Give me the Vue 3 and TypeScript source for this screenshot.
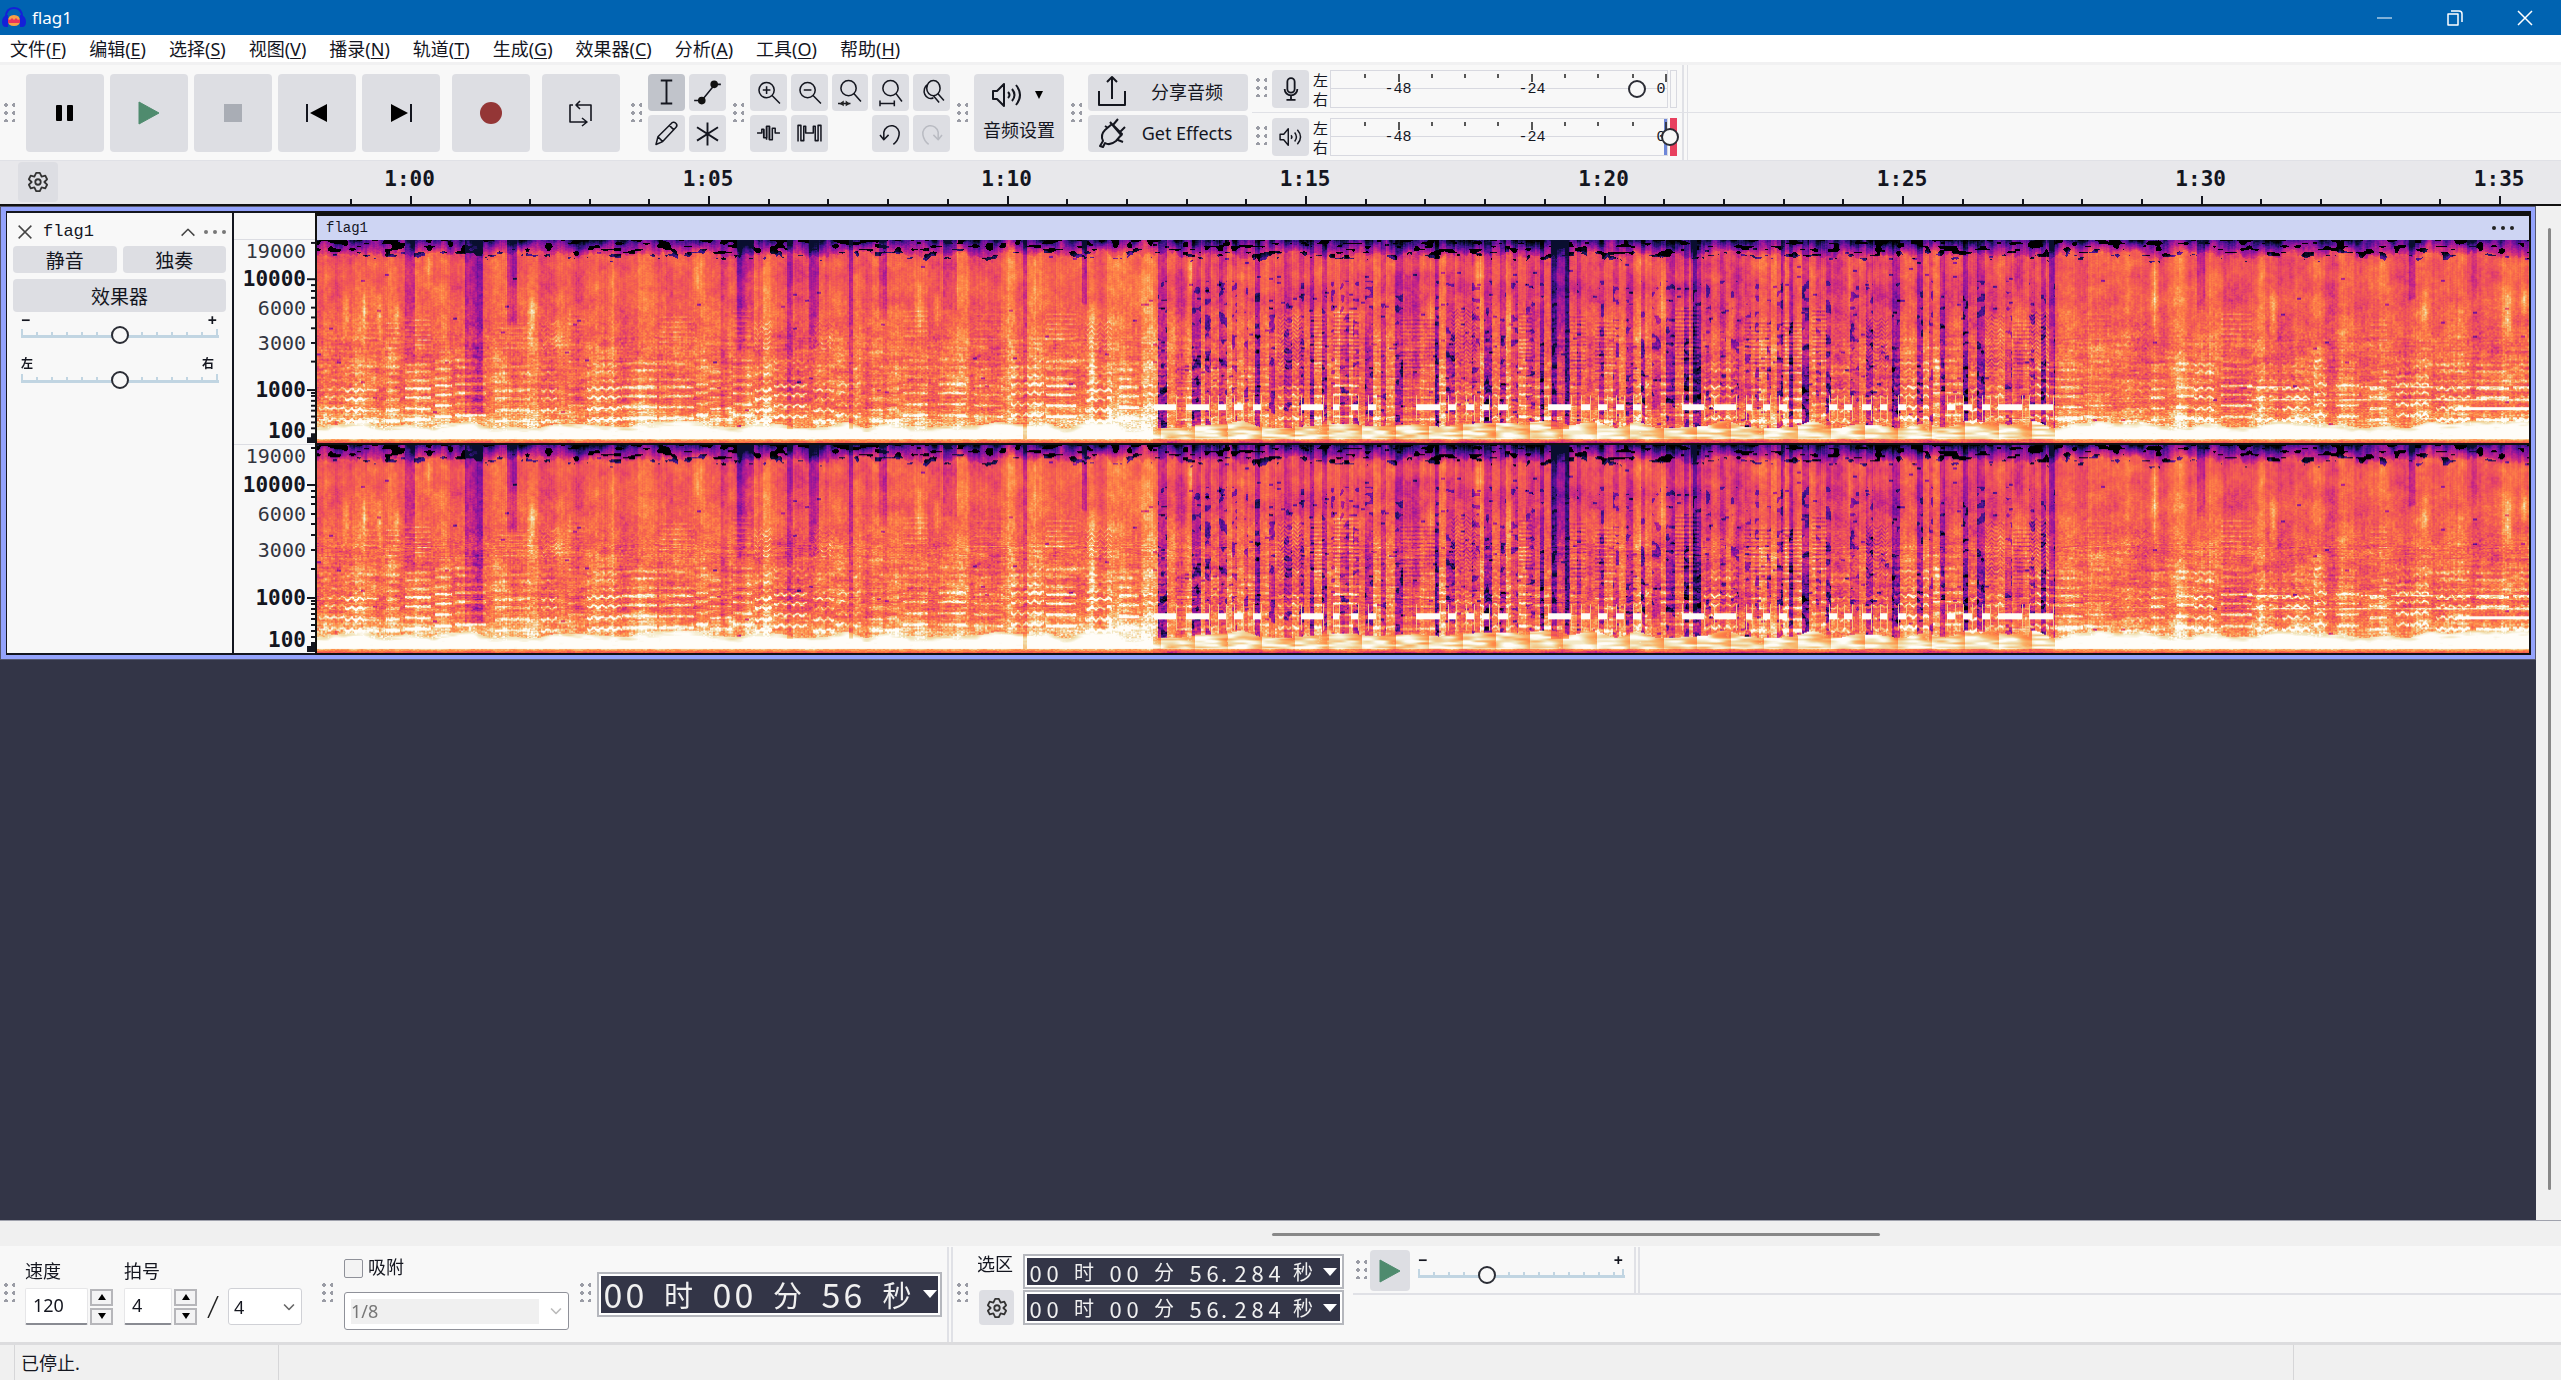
<script setup lang="ts">
import { h, onMounted, ref } from 'vue'

interface Shape { d: string; fill?: string; stroke?: string; w?: number }

const ICONS: Record<string, Shape[]> = {
  pause: [{ d: 'M3 3h4a1 1 0 0 1 1 1v14a1 1 0 0 1-1 1H3a1 1 0 0 1-1-1V4a1 1 0 0 1 1-1zM14 3h4a1 1 0 0 1 1 1v14a1 1 0 0 1-1 1h-4a1 1 0 0 1-1-1V4a1 1 0 0 1 1-1z', fill: '#000', stroke: 'none' }],
  play: [{ d: 'M1 0L21 11L1 22z', fill: '#4f8b6e', stroke: '#4f8b6e', w: 1 }],
  stop: [{ d: 'M2 2h18v18H2z', fill: '#a9adb5', stroke: 'none' }],
  prev: [{ d: 'M1 2v18', w: 2 }, { d: 'M21 2v18L4 11z', fill: '#000', stroke: 'none' }],
  next: [{ d: 'M21 2v18', w: 2 }, { d: 'M1 2v18L18 11z', fill: '#000', stroke: 'none' }],
  record: [{ d: 'M11 0a11 11 0 1 1 0 22a11 11 0 1 1 0-22z', fill: '#943636', stroke: 'none' }],
  loop: [{ d: 'M3 3H0v17h6M10 20h6M16 20h0M21 19V3H6M10-1L6 3l4 4M12 16l5 4l-5 4M6 20h10' }],
  ibeam: [{ d: 'M5-1h12M5 23h12M11-1v24', w: 2 }],
  envelope: [{ d: 'M-3 20h8M17 3h8M5 20L18 4' }, { d: 'M5 16a4 4 0 1 1 0 8a4 4 0 1 1 0-8zM18-1a4 4 0 1 1 0 8a4 4 0 1 1 0-8z', fill: '#111', stroke: 'none' }],
  pencil: [{ d: 'M0 23l2-8L16 1a3 3 0 0 1 5 4L7 20zM2 15l5 5M14 3l5 5' }],
  star: [{ d: 'M11 0v24M0 5l22 14M22 5L0 19', w: 2 }],
  zoomIn: [{ d: 'M9 1a8 8 0 1 1 0 16a8 8 0 1 1 0-16zM15 15l8 8M9 5v8M5 9h8' }],
  zoomOut: [{ d: 'M9 1a8 8 0 1 1 0 16a8 8 0 1 1 0-16zM15 15l8 8M5 9h8' }],
  zoomSel: [{ d: 'M10-1a8 8 0 1 1 0 16a8 8 0 1 1 0-16zM16 13l7 8M-1 23h13' }, { d: 'M-1 23h3v-1l3-2v6l-3-2zM12 23h-1l-4-3v6z', fill: '#222', stroke: 'none' }],
  zoomFit: [{ d: 'M11-1a8 8 0 1 1 0 16a8 8 0 1 1 0-16zM17 13l6 8M0 23h15M0 20v6M15 20v6' }],
  zoomToggle: [{ d: 'M13-1a7 8 0 1 1 0 16a7 8 0 1 1 0-16zM7 3a6 7 0 1 0 6 14M18 13l6 7M13 15l6 7' }],
  trim: [{ d: 'M-1 11h5v-4h2v9h3v-12h3v14h3v-12h3v5h5' }, { d: 'M6 16v-9M9 4v14M12 4v14' }],
  silence: [{ d: 'M-1 20V3h3v16h3V4h2v7h8V4h2v15h3V3h3v17' }],
  undo: [{ d: 'M4 17V10a8 8 0 1 1 16 3q-1 6-6 10M0 13l4 5l5-5' }],
  redo: [{ d: 'M18 17V10a8 8 0 1 0-16 3q1 6 6 10M22 13l-4 5l-5-5' }],
  share: [{ d: 'M-2 10v14h26V10M11 18V-4M6 1l5-5l5 5', w: 2 }],
  plug: [{ d: 'M-1 24l3-5q-3-6 2-11l7-6l10 10l-6 7q-6 5-11 2l-2 4zM7 6l-3-2M12 3l5-6M19 10l5-5M17 18l5 2M9 0l12 14', w: 2 }],
  speaker: [{ d: 'M-2 7h4l7-7v22l-7-7h-4zM13 8q3 3 0 6M17 5q5 6 0 12M21 1q8 10 0 20', w: 2 }],
  speakerSmall: [{ d: 'M-1 8h4l5-6v18l-5-6h-4zM11 9q2 2 0 4M15 6q4 5 0 10M18 3q7 8 0 16' }],
  mic: [{ d: 'M11-1a4 4 0 0 1 4 4v8a4 4 0 0 1-8 0V3a4 4 0 0 1 4-4zM4 11a7 7 0 0 0 14 0M11 18v5M6 23h10', w: 2 }],
  gear: [{ d: 'M9 1h4l2 4l4-1l2 4l-3 3l3 3l-2 4l-4-1l-2 4H9l-2-4l-4 1l-2-4l3-3l-3-3l2-4l4 1zM11 8a3 3 0 1 1 0 6a3 3 0 1 1 0-6z', w: 2 }],
  close: [{ d: 'M4 4l14 14M18 4L4 18' }],
  up: [{ d: 'M4 15l7-7l7 7' }],
  chevron: [{ d: 'M5 8l6 6l6-6', w: 2 }],
}

const Icon = (props: { name: string; size?: number }) =>
  h(
    'svg',
    { width: props.size ?? 22, height: props.size ?? 22, viewBox: '0 0 22 22', overflow: 'visible', 'aria-hidden': 'true' },
    ICONS[props.name].map((s) =>
      h('path', { d: s.d, fill: s.fill ?? 'none', stroke: s.stroke ?? 'currentColor', 'stroke-width': s.w ?? 1.6, 'stroke-linejoin': 'round' }),
    ),
  )
Icon.props = ['name', 'size']

const menus = [
  ['文件', 'F'], ['编辑', 'E'], ['选择', 'S'], ['视图', 'V'], ['播录', 'N'], ['轨道', 'T'],
  ['生成', 'G'], ['效果器', 'C'], ['分析', 'A'], ['工具', 'O'], ['帮助', 'H'],
]
const transport = [
  { icon: 'pause', label: '暂停' }, { icon: 'play', label: '播放' }, { icon: 'stop', label: '停止' },
  { icon: 'prev', label: '跳至开头' }, { icon: 'next', label: '跳至结尾' },
]
const editTools = ['zoomIn', 'zoomOut', 'zoomSel', 'zoomFit', 'zoomToggle', 'trim', 'silence', '', 'undo', 'redo']

const seconds = Array.from({ length: 37 }, (_, i) => {
  const t = 59 + i
  return { t, major: t % 5 === 0, label: `${Math.floor(t / 60)}:${String(t % 60).padStart(2, '0')}` }
})

const meterTicks = [35, 69, 102, 135, 168, 202, 235, 268, 303, 336]

const freqTicks = [4, 41, 47, 53, 60, 70, 80, 91, 106, 125, 154, 157, 160, 165, 170, 175, 181, 187, 193]
const freqLabels = [
  { y: 12, text: '19000', bold: false }, { y: 41, text: '10000', bold: true }, { y: 70, text: '6000', bold: false },
  { y: 106, text: '3000', bold: false }, { y: 154, text: '1000', bold: true }, { y: 196, text: '100', bold: true },
]
const channels = [{ height: 205 }, { height: 209 }]

const selectionStart = ['0', '0', '时', '0', '0', '分', '5', '6', '.', '2', '8', '4', '秒']
const playPosition = ['0', '0', '时', '0', '0', '分', '5', '6', '秒']
const kind = (c: string) => (c === '.' ? 'dot' : /\d/.test(c) ? 'digit' : 'unit')

/* Spectrogram */
const W = 2212
const H = 204
const canvases = ref<HTMLCanvasElement[]>([])

const STOPS: [number, number, number, number][] = [
  [0, 0, 0, 0], [0.1, 12, 18, 60], [0.2, 60, 18, 140], [0.32, 130, 18, 160], [0.44, 190, 32, 140],
  [0.56, 232, 70, 100], [0.67, 247, 102, 76], [0.77, 255, 138, 70], [0.86, 248, 184, 108], [0.93, 240, 226, 180], [1, 255, 253, 248],
]
const palette = Array.from({ length: 256 }, (_, i) => {
  const v = i / 255
  let k = 1
  while (k < STOPS.length - 1 && STOPS[k][0] < v) k++
  const a = STOPS[k - 1]
  const b = STOPS[k]
  const f = (v - a[0]) / (b[0] - a[0])
  return [1, 2, 3].map((c) => a[c] + (b[c] - a[c]) * f)
})

function hash(a: number, b: number): number {
  let n = Math.imul(a | 0, 374761393) ^ Math.imul((b | 0) + 77, 668265263)
  n = Math.imul(n ^ (n >>> 13), 1274126177)
  return ((n ^ (n >>> 16)) >>> 0) / 4294967296
}
function smooth(x: number, seed: number): number {
  const i = Math.floor(x)
  const f = x - i
  const s = f * f * (3 - 2 * f)
  return hash(i, seed) * (1 - s) + hash(i + 1, seed) * s
}
function noise2(x: number, y: number, seed: number): number {
  const j = Math.floor(y)
  const f = y - j
  return smooth(x, seed + j * 31) * (1 - f) + smooth(x, seed + (j + 1) * 31) * f
}

/* Held notes of the lead tone, as [start, end] columns */
const LEAD: [number, number][] = [
  [837, 859], [869, 892], [901, 909], [917, 926], [936, 944], [984, 1006], [1016, 1022], [1034, 1041], [1051, 1059],
  [1099, 1123], [1131, 1139], [1149, 1157], [1165, 1172], [1181, 1191], [1231, 1254], [1264, 1273], [1281, 1290],
  [1299, 1307], [1316, 1324], [1365, 1387], [1397, 1419], [1429, 1435], [1446, 1453], [1462, 1470], [1512, 1520],
  [1527, 1535], [1545, 1554], [1563, 1570], [1581, 1589], [1630, 1638], [1646, 1655], [1665, 1673], [1681, 1705], [1712, 1736],
]
/* Quiet columns, as [start, end, depth, lowest row] */
const QUIET: [number, number, number, number][] = [
  [88, 98, 0.2, 120], [148, 166, 0.26, 175], [190, 200, 0.2, 85], [420, 437, 0.24, 110], [470, 476, 0.18, 190],
  [492, 502, 0.24, 110], [532, 536, 0.2, 190], [562, 570, 0.18, 80], [626, 640, 0.16, 70], [706, 710, 0.24, 200],
  [765, 770, 0.28, 65], [1234, 1252, 0.34, 190], [1374, 1380, 0.22, 175], [1464, 1468, 0.24, 160], [1732, 1737, 0.2, 190],
  [1880, 1888, 0.18, 70], [2092, 2098, 0.2, 60], [2150, 2160, 0.1, 60],
]
/* Bright bursts, as [centre, half width, first row, last row] */
const BURSTS: [number, number, number, number][] = [
  [29, 4, 40, 90], [47, 3, 50, 90], [62, 3, 50, 105], [80, 4, 50, 105], [111, 5, 5, 50], [214, 4, 45, 115], [380, 6, 5, 60],
  [602, 5, 40, 95], [620, 4, 50, 95], [775, 5, 60, 190], [874, 4, 5, 60], [1025, 4, 30, 110], [1113, 4, 55, 90], [1142, 5, 50, 110],
  [1160, 5, 0, 70], [1193, 5, 45, 110], [1298, 4, 50, 115], [1345, 6, 20, 90], [1415, 4, 55, 105], [1533, 4, 5, 80],
  [1552, 3, 5, 100], [1701, 5, 45, 100], [1837, 4, 5, 100], [1956, 4, 45, 105], [2107, 5, 45, 90], [2190, 5, 45, 105], [2207, 4, 40, 80],
]

interface Note { x0: number; x1: number; shift: number; gain: number; top: number; wave: number }
function buildNotes(): Note[] {
  const notes: Note[] = []
  let x = 2
  let i = 0
  while (x < W) {
    const len = 12 + Math.floor(hash(i, 5) * 24)
    notes.push({
      x0: x, x1: Math.min(W, x + len), shift: Math.floor(hash(i, 6) * 5) * 3 - 7,
      gain: 0.4 + hash(i, 7) * 0.6, top: hash(i, 9) < 0.45 ? 1 : 0, wave: hash(i, 8) < 0.4 ? 1 : 0,
    })
    x += len + Math.floor(hash(i, 10) * 12)
    i++
  }
  return notes
}

function buildField(): Float32Array {
  const v = new Float32Array(W * H)
  const band: number[] = []
  for (let x = 0, i = 0; x < W; i++) {
    const inBeat = x > 835 && x < 1738
    const len = inBeat ? 4 + Math.floor(hash(i, 1) * 6) : 3 + Math.floor(hash(i, 1) * 13)
    const lvl = inBeat ? (i % 2) * 0.5 + hash(i, 2) * 0.5 : hash(i, 2)
    for (let k = 0; k < len && x < W; k++, x++) band[x] = lvl
  }
  for (let x = 0; x < W; x++) {
    const beat = x > 835 && x < 1738
    const late = x > 690 && x <= 835
    const phase = ((x - 844 + 3350) % 33.5) / 33.5
    const col = smooth(x / 9, 12) * 0.6 + band[x] * 0.4
    const fine = hash(x, 14) - 0.5
    const topEdge = 8 + smooth(x / 14, 15) * 7 + smooth(x / 3, 16) * 5
    for (let y = 0; y < H; y++) {
      const mid = Math.min(1, Math.max(0, (y - 40) / 70))
      let s = 0.64 + (col - 0.5) * (beat ? 0.3 : 0.22) + fine * 0.05 + mid * 0.04
      if (late) s += 0.05
      if (beat) {
        s -= 0.03
        const reach = Math.min(1, Math.max(0, (y - 60) / 70))
        const stripe = Math.max(0, 0.5 - band[x])
        s -= stripe * (0.2 + reach * 0.5 * (0.4 + noise2(x / 30, y / 30, 200)))
        s -= Math.exp(-((y - 55) ** 2) / 400) * 0.06
        if (stripe > 0.1 && y > 40 && noise2(x / 5, y / 4, 950) > 0.72) s -= 0.25
      }
      s += (noise2(x / 20, y / 12, 40) - 0.5) * 0.12
      s += (noise2(x / 3, y / 4, 90) - 0.5) * 0.1
      s += (hash(x >> 1, y + 4000) - 0.5) * (0.06 + mid * 0.13)
      if (y > 95 && y < 186) s += (noise2(x / 18, y * 0.9, 300) - 0.5) * 0.18
      if (hash(x >> 2, (y >> 1) + 900) < (beat ? 0.012 : 0.003)) s -= 0.3
      if (y < topEdge + 8) s -= 0.08 * (1 - y / (topEdge + 8))
      if (y < topEdge) s -= 0.08 + 0.42 * (1 - y / topEdge) * (0.3 + smooth(x / 6, 60) * 0.8)
      if (y < topEdge + 3 && noise2(x / 7, y / 3, 500) > 0.68) s -= 0.45
      if (y > 160) {
        const glow = Math.min(1, (y - 160) / 24)
        s += glow * (beat ? 0.14 : 0.18)
      }
      const floor = 181 + smooth(x / 22, 70) * 8
      if (y > floor) {
        s = beat
          ? Math.max(s * 0.9, 0.95 - Math.max(0, phase - (y - 176) / 30) * 0.3 + (noise2(x / 14, y / 2, 620) - 0.5) * 0.22)
          : Math.max(s, 0.92 + Math.min(0.12, (y - floor) * 0.02) + (noise2(x / 9, y / 2, 600) - 0.5) * 0.1)
      }
      if (y > 199) s -= (y - 198) * 0.07 + hash(x >> 1, y) * 0.1
      v[y * W + x] = s
    }
  }
  for (const [a, b, depth, low] of QUIET)
    for (let x = a; x < b; x++)
      for (let y = 0; y < low; y++) v[y * W + x] = Math.max(0.08, v[y * W + x] - depth * (1 - (y / low) * 0.5))
  for (const [c, hw, y0, y1] of BURSTS)
    for (let x = c - hw; x <= c + hw && x < W; x++)
      for (let y = y0; y < y1; y++) {
        const t = Math.sin((Math.PI * (y - y0)) / (y1 - y0))
        v[y * W + x] += 0.18 * t * (1 - Math.abs(x - c) / (hw + 1))
      }
  const bases = [179, 168, 157, 148, 140, 131, 124]
  for (const n of buildNotes()) {
    const beat = n.x0 > 835 && n.x0 < 1738
    for (let x = n.x0; x < n.x1; x++) {
      const wob = n.wave ? Math.sin((x - n.x0) * 0.75) * 1.2 : 0
      bases.forEach((b, k) => {
        const cy = b + n.shift * 0.5 + wob
        const amp = (k < 4 ? 0.34 : 0.17) * n.gain
        for (let y = Math.floor(cy) - 2; y <= cy + 2; y++) {
          const d = Math.abs(y - cy)
          if (d < 1.8) v[y * W + x] += amp * (1 - d / 2.4)
          else if (beat) v[y * W + x] -= 0.05
        }
      })
      if (n.top) {
        for (let k = 0; k < (beat ? 14 : 6); k++) {
          const cy = (beat ? 76 : 78) + n.shift + k * (beat ? 4 : 5) + wob * 1.3
          const y = Math.round(cy)
          v[y * W + x] += 0.14 * n.gain
          v[(y + 2) * W + x] -= beat ? 0.12 : 0.04
        }
      }
    }
  }
  for (const [a, b] of LEAD) {
    for (let x = a; x < b; x++) for (let y = 165; y < 171; y++) v[y * W + x] = 1.1
    for (const x of [a, b]) for (let y = 156; y < 182; y++) v[y * W + x] = Math.max(v[y * W + x], 0.88)
  }
  for (let x = 1930; x < W; x++) {
    for (const y of [147, 160]) if (smooth(x / 15, y) > 0.3) { v[y * W + x] += 0.25; v[(y + 1) * W + x] += 0.15 }
    if (x > 2140) for (let y = 168; y < 171; y++) v[y * W + x] = 1
  }
  return v
}

onMounted(() => {
  const field = buildField()
  for (const canvas of canvases.value) {
    const ctx = canvas.getContext('2d')
    if (!ctx) continue
    const img = ctx.createImageData(W, H)
    for (let i = 0; i < W * H; i++) {
      const c = palette[Math.max(0, Math.min(255, Math.round(field[i] * 255)))]
      img.data[i * 4] = c[0]
      img.data[i * 4 + 1] = c[1]
      img.data[i * 4 + 2] = c[2]
      img.data[i * 4 + 3] = 255
    }
    ctx.putImageData(img, 0, 0)
  }
})
</script>

<template>
  <div class="app">
    <header class="titlebar">
      <svg class="logo" width="24" height="22" viewBox="0 0 24 22" aria-hidden="true">
        <path d="M4 10Q4 1 12 1T20 10" fill="none" stroke="#1420d8" stroke-width="2" />
        <path d="M4 8Q0 10 0 15T4 20H6V8zM20 8q4 2 4 7t-4 5h-2V8z" fill="#1420d8" />
        <path d="M6 14q0-6 6-6t6 6q0 5-6 5t-6-5z" fill="#f7a046" />
        <path d="M6 12l2 1l2-2l2 2l2-2l2 2l2-1v4H6z" fill="#e8345c" />
      </svg>
      <h1>flag1</h1>
      <div class="caption">
        <button aria-label="最小化"><svg width="16" height="16"><path d="M0 8h15" stroke="#fff" stroke-width="1" fill="none" /></svg></button>
        <button aria-label="还原"><svg width="16" height="16"><path d="M1 4h10v11H1zM4 1h8q3 0 3 3v8" stroke="#fff" stroke-width="1.500" fill="none" stroke-linejoin="round" /></svg></button>
        <button aria-label="关闭"><svg width="16" height="16"><path d="M1 1l14 14M15 1L1 15" stroke="#fff" stroke-width="1.500" fill="none" /></svg></button>
      </div>
    </header>

    <nav class="menubar">
      <button v-for="m in menus" :key="m[1]">{{ m[0] }}(<u>{{ m[1] }}</u>)</button>
    </nav>

    <div class="topbar">
      <span class="grip" />
      <div class="transport">
        <button v-for="b in transport" :key="b.icon" class="btn big" :aria-label="b.label"><Icon :name="b.icon" /></button>
        <button class="btn big apart" aria-label="录制"><Icon name="record" /></button>
        <button class="btn big apart" aria-label="循环"><Icon name="loop" /></button>
      </div>
      <span class="grip" />
      <div class="tools">
        <button class="btn active" aria-label="选择工具"><Icon name="ibeam" /></button>
        <button class="btn" aria-label="包络工具"><Icon name="envelope" /></button>
        <button class="btn" aria-label="绘制工具"><Icon name="pencil" /></button>
        <button class="btn" aria-label="多功能工具"><Icon name="star" /></button>
      </div>
      <span class="grip" />
      <div class="tools edit">
        <template v-for="(t, i) in editTools" :key="i">
          <button v-if="t" class="btn" :class="{ off: t === 'redo' }" :aria-label="t"><Icon :name="t" /></button>
          <span v-else />
        </template>
      </div>
      <span class="grip" />
      <button class="btn setup">
        <span class="setup-icons"><Icon name="speaker" /><i class="tri" /></span>
        音频设置
      </button>
      <span class="grip" />
      <div class="share">
        <button class="btn"><Icon name="share" /><span>分享音频</span></button>
        <button class="btn"><Icon name="plug" /><span>Get Effects</span></button>
      </div>
      <div class="meters">
        <div v-for="m in ['mic', 'speakerSmall']" :key="m" class="meter-row">
          <div class="meter-bar" :class="m">
            <span class="grip" />
            <button class="btn" :aria-label="m === 'mic' ? '录制电平' : '播放电平'"><Icon :name="m" /></button>
            <div class="lr"><span>左</span><span>右</span></div>
            <div class="meter">
              <svg width="338" height="38" aria-hidden="true">
                <rect v-if="m !== 'mic'" x="334" y="1" width="3" height="36" fill="#6d86d8" />
                <path d="M0 18.500H338" stroke="#d8d9e0" />
                <path v-for="(x, i) in meterTicks" :key="x" :d="`M${x} 4v${i % 4 === 1 ? 8 : 4}`" stroke="#222" stroke-width="1.500" />
                <text x="68" y="23">-48</text>
                <text x="202" y="23">-24</text>
                <text x="331" y="23">0</text>
              </svg>
            </div>
            <div class="clip-light" />
            <input type="range" class="level" :aria-label="m === 'mic' ? '录制音量' : '播放音量'" :value="m === 'mic' ? 90 : 100" />
          </div>
          <div class="meter-rest" />
        </div>
      </div>
    </div>

    <div class="timeline">
      <button class="btn gear" aria-label="时间线选项"><Icon name="gear" :size="20" /></button>
      <div class="seconds">
        <div v-for="s in seconds" :key="s.t" class="second" :class="{ major: s.major }"><span v-if="s.major">{{ s.label }}</span></div>
      </div>
    </div>

    <main class="workspace">
      <div class="tracks">
        <section class="track">
          <div class="panel">
            <div class="panel-head">
              <button aria-label="关闭轨道"><Icon name="close" /></button>
              <span class="name">flag1</span>
              <button aria-label="折叠"><Icon name="up" /></button>
              <button class="dots" aria-label="轨道菜单"><i /><i /><i /></button>
            </div>
            <div class="pair">
              <button class="btn">静音</button>
              <button class="btn">独奏</button>
            </div>
            <button class="btn fx">效果器</button>
            <div class="slider">
              <div class="ends"><b>−</b><b>+</b></div>
              <input type="range" aria-label="增益" value="50" />
            </div>
            <div class="slider pan">
              <div class="ends"><span>左</span><span>右</span></div>
              <input type="range" aria-label="声像" value="50" />
            </div>
          </div>
          <div class="scale">
            <svg v-for="c in channels" :key="c.height" class="freq" width="81" :height="c.height" viewBox="0 0 81 209" preserveAspectRatio="none">
              <path d="M0 .5H81" stroke="#dcdde3" />
              <path v-for="y in freqTicks" :key="y" :d="`M${y === 41 || y === 154 ? 73 : 77} ${y}H81`" stroke="#14161f" stroke-width="2" />
              <path d="M77 198h4v10h-8v-6h4z" fill="#14161f" />
              <text v-for="l in freqLabels" :key="l.y" x="72" :y="l.y + 7" :class="{ bold: l.bold }">{{ l.text }}</text>
            </svg>
          </div>
          <div class="clip">
            <div class="clip-head"><span>flag1</span><button class="dots" aria-label="片段菜单"><i /><i /><i /></button></div>
            <canvas v-for="c in channels" :key="c.height" ref="canvases" :width="W" :height="H" />
          </div>
        </section>
      </div>
      <div class="vscroll"><div class="vthumb" /></div>
    </main>
    <div class="hscroll"><div class="hthumb" /></div>

    <div class="bottombar">
      <span class="grip" />
      <div class="field tempo">
        <label for="tempo">速度</label>
        <div class="spin">
          <input id="tempo" value="120" />
          <div class="arrows"><button aria-label="增加速度"><i class="tri up" /></button><button aria-label="降低速度"><i class="tri" /></button></div>
        </div>
      </div>
      <div class="field meter-sig">
        <label for="beats">拍号</label>
        <div class="spin">
          <input id="beats" value="4" />
          <div class="arrows"><button aria-label="增加拍数"><i class="tri up" /></button><button aria-label="减少拍数"><i class="tri" /></button></div>
          <svg class="slash" width="12" height="22" aria-hidden="true"><path d="M11 0L1 22" stroke="#222" stroke-width="1.500" /></svg>
          <div class="combo unit-combo">
            <select aria-label="拍号分母"><option>4</option></select>
            <Icon name="chevron" :size="18" />
          </div>
        </div>
      </div>
      <span class="grip" />
      <div class="snap">
        <label><input type="checkbox" />吸附</label>
        <div class="combo snap-combo">
          <select aria-label="吸附到" disabled><option>1/8</option></select>
          <Icon name="chevron" :size="18" />
        </div>
      </div>
      <span class="grip" />
      <div class="time large">
        <span v-for="(c, i) in playPosition" :key="i" :class="kind(c)">{{ c }}</span>
        <button aria-label="时间格式" />
      </div>
      <div class="rails" />
      <span class="grip" />
      <div class="sel-left">
        <span>选区</span>
        <button class="btn gear" aria-label="选区选项"><Icon name="gear" :size="20" /></button>
      </div>
      <div class="sel-times">
        <div v-for="n in 2" :key="n" class="time">
          <span v-for="(c, i) in selectionStart" :key="i" :class="kind(c)">{{ c }}</span>
          <button aria-label="时间格式" />
        </div>
      </div>
      <div class="speed">
        <div class="speed-inner">
          <span class="grip" />
          <button class="btn play" aria-label="按速播放"><Icon name="play" /></button>
          <div class="slider">
            <div class="ends"><b>−</b><b>+</b></div>
            <input type="range" aria-label="播放速度" value="32" />
          </div>
          <div class="rails" />
        </div>
      </div>
    </div>

    <footer class="status"><span class="state">已停止.</span><span class="message" /><span class="rate" /></footer>
  </div>
</template>

<style>
body { margin: 0; }
</style>

<style scoped>
.app {
  display: flex; flex-direction: column; min-height: 100vh; overflow: hidden;
  background: #f8f8f8; color: #14161f;
  font: 18px/24px "Noto Sans", "Noto Sans CJK SC", sans-serif;
}
.app *, .app *::before, .app *::after { box-sizing: border-box; }
button, input, select { font: inherit; color: inherit; margin: 0; padding: 0; border: 0; background: none; }
button { cursor: pointer; white-space: nowrap; }
svg { display: block; flex: none; }

.titlebar { display: flex; align-items: center; height: 35px; padding-left: 2px; background: #0063b1; color: #fff; }
.titlebar h1 { margin: 0 0 0 6px; font-size: 17px; font-weight: 400; flex: 1; }
.caption { display: flex; }
.caption button { width: 70px; height: 33px; display: grid; place-items: center; }
.caption button:last-child { margin-right: 1px; }

.menubar { display: flex; height: 27px; background: #fff; }
.menubar button { padding: 0 11px 0 10px; line-height: 29px; margin-right: 2px; }
.menubar u { text-underline-offset: 2px; text-decoration-thickness: 1px; }

.btn { display: flex; align-items: center; justify-content: center; border-radius: 4px; background: #dddee3; }
.btn.active { background: #c1c4cb; }
.btn.off { color: #b9bbc2; }

.grip {
  flex: none; align-self: center; width: 11px; height: 19px; margin: 0 6px 0 7px;
  background: radial-gradient(circle at 2px 2px, #9a9ca5 2px, transparent 2px) 0 0 / 8px 8px;
}

.topbar { display: flex; align-items: center; height: 99px; border-top: 3px solid #f1f1f2; border-bottom: 1px solid #e0e1e6; overflow: hidden; }
.topbar > .grip:first-child { margin: 0 11px 0 4px; }
.transport { display: flex; gap: 6px; margin-right: 4px; }
.big { width: 78px; height: 78px; }
.apart { margin-left: 6px; }
.tools { display: grid; grid-template-columns: repeat(2, 1fr); grid-auto-rows: 37px; gap: 4px; width: 78px; }
.edit { grid-template-columns: repeat(5, 1fr); width: 200px; }
.edit svg, .tools svg { width: 21px; }
.setup { flex-direction: column; width: 90px; height: 78px; gap: 12px; }
.setup-icons { display: flex; align-items: center; gap: 18px; }
.tri { width: 0; height: 0; border: 4px solid transparent; border-top: 8px solid #000; border-bottom: 0; }
.tri.up { border: 4px solid transparent; border-bottom: 6px solid #000; border-top: 0; }
.share { display: grid; gap: 4px; width: 160px; }
.share .btn { height: 37px; padding-left: 13px; }
.share span { flex: 1; text-align: center; padding-left: 3px; }

.meters { flex: 1; margin-left: 4px; align-self: stretch; }
.meter-row { display: flex; height: 47px; }
.meter-row:first-child { height: 48px; border-bottom: 1px solid #e0e1e6; }
.meter-bar { position: relative; display: flex; width: 432px; border-right: 2px solid #e0e1e6; padding-top: 5px; }
.meter-bar .grip { margin: 8px 5px 0 4px; align-self: flex-start; }
.meter-bar .btn { width: 37px; height: 38px; }
.meter-bar .btn svg { width: 20px; }
.meter-rest { flex: 1; margin-left: 3px; border-left: 1px solid #e0e1e6; }
.lr { display: grid; grid-template-rows: 19px 19px; width: 15px; margin: 0 2px 0 4px; font: 15px/19px "Noto Sans CJK SC", sans-serif; height: 38px; }
.meter { width: 338px; height: 38px; border: 1px solid #d8d9e0; }
.meter svg { margin: -1px; }
.meter text { font: 15px "Liberation Mono", monospace; text-anchor: middle; fill: #14161f; }
.clip-light { width: 7px; height: 38px; margin-left: 2px; border: 1px solid #d8d9e0; }
.speakerSmall .clip-light { background: #e8405e; border-color: #e8405e; }
.level { position: absolute; left: 77px; width: 350px; top: 15px; }

input[type="range"] { appearance: none; display: block; height: 18px; background: none; outline: none; }
input[type="range"]::-webkit-slider-thumb {
  appearance: none; width: 18px; height: 18px; border: 2px solid #2b2d35; border-radius: 50%; background: #f8f8f8;
}

.timeline { display: flex; height: 45px; background: #e8e8eb; border-bottom: 2px solid #111; }
.timeline .gear { width: 40px; height: 40px; margin: 1px 0 0 18px; }
.gear { color: #333; }
.seconds { flex: 1; display: grid; grid-template-columns: repeat(37, 1fr); margin: 0 32px 0 262px; }
.second { position: relative; display: flex; justify-content: center; align-items: flex-start; font: bold 21px/24px "DejaVu Sans Mono", monospace; padding-top: 6px; }
.second::after { content: ""; position: absolute; bottom: 0; left: 50%; width: 2px; height: 5px; background: #14161f; }
.second.major::after { height: 8px; }

.workspace { flex: 1; display: flex; background: #333547; }
.tracks { flex: 1; min-width: 0; }
.track { display: flex; height: 454px; border: 5px solid #94a3fc; outline: 1px solid #55576d; outline-offset: -1px; border-left-width: 6px; box-shadow: inset 0 0 0 2px #14161f; }
.panel { width: 227px; margin: 2px 0 2px 1px; background: #f8f8f8; border-right: 2px solid #14161f; padding: 5px 6px; }
.panel-head { display: flex; align-items: center; height: 28px; gap: 6px; color: #444; }
.panel-head > button { width: 22px; }
.panel-head button svg { width: 20px; margin-left: 2px; }
.name { flex: 1; font: 17px/24px "Liberation Mono", monospace; color: #14161f; padding-left: 2px; }
.dots { display: flex; gap: 5px; justify-content: center; }
.dots i { width: 4px; height: 4px; border-radius: 2px; background: #777; }
.pair { display: grid; grid-template-columns: 1fr 1fr; gap: 6px; }
.panel .btn { height: 27px; font: 19px/24px "Noto Sans CJK SC", sans-serif; }
.panel .fx { width: 100%; height: 33px; margin: 6px 0 2px; }
.slider { position: relative; width: 198px; margin-left: 8px; }
.ends { display: flex; justify-content: space-between; height: 12px; line-height: 12px; font-size: 16px; padding-right: 2px; }
.slider input { position: relative; width: 100%; }
.slider::before {
  content: ""; position: absolute; left: 0; right: 0; bottom: 6px; height: 6px;
  border-bottom: 3px solid #c1d5e2;
  background: repeating-linear-gradient(90deg, #c1d5e2 0 2px, transparent 2px 15px);
}
.slider::after { content: ""; position: absolute; left: 0; right: 1px; bottom: 8px; height: 7px; border: solid #c1d5e2; border-width: 0 2px; }
.panel .pan { margin-top: 12px; }
.pan .ends { font: bold 12px/14px "Noto Sans CJK SC", sans-serif; height: 15px; padding-right: 5px; }

.scale { width: 81px; margin: 2px 0; padding-top: 26px; background: #f8f8f8; }
.freq text { font: 20px "DejaVu Sans Mono", monospace; text-anchor: end; fill: #33353f; }
.freq text.bold { font-weight: 700; font-size: 21px; fill: #14161f; }
.clip { flex: 1; min-width: 0; background: #111; padding: 5px 2px 1px; }
.clip-head { display: flex; justify-content: space-between; align-items: center; height: 24px; padding: 0 15px 0 9px; background: #ced5f3; font: 14px/24px "Liberation Mono", monospace; }
.clip-head .dots i { background: #222; }
.clip canvas { display: block; width: 100%; height: 203px; }
.clip canvas:last-child { height: 208px; margin-top: 2px; }

.vscroll { width: 25px; padding: 22px 0 0 12px; background: #f0f0f0; }
.vthumb { width: 3px; height: 97%; border-radius: 2px; background: #888; }
.hscroll { height: 26px; padding: 12px 0 0; border-top: 1px solid #a0a2ad; background: #f0f0f0; }
.hthumb { width: 23.750%; height: 3px; margin-left: 49.650%; border-radius: 2px; background: #888; }

.bottombar { display: flex; height: 96px; overflow: hidden; }
.bottombar > .grip { position: relative; top: -2px; }
.bottombar > .grip:first-child { margin: 0 10px 0 4px; }
.field label { display: block; margin: 13px 0 5px; line-height: 24px; }
.tempo { width: 99px; }
.spin { display: flex; align-items: center; height: 37px; }
.spin input { width: 63px; height: 37px; padding-left: 7px; padding-bottom: 2px; background: #fff; border: 1px solid #e6e6e8; border-bottom: 2px solid #898b92; border-radius: 2px; }
.meter-sig .spin input { width: 48px; }
.arrows { display: grid; gap: 2px; margin-left: 2px; }
.arrows button { display: grid; place-items: center; width: 23px; height: 17px; border: 2px solid #b6b6ba; background: #f3f3f4; }
.arrows .tri { border-top-width: 6px; }
.arrows .tri.up { border-top-width: 0; }
.slash { margin: 0 9px 0 10px; }
.combo { position: relative; }
.combo svg { position: absolute; right: 4px; top: 10px; color: #666; pointer-events: none; }
.combo select { appearance: none; width: 100%; height: 37px; padding-left: 5px; border: 1px solid #d0d1d6; border-radius: 3px; background: #fff; }
.unit-combo { width: 74px; }
.meter-sig { margin-right: 13px; }
.snap { width: 225px; margin-left: 5px; }
.snap label { display: flex; align-items: center; gap: 5px; height: 24px; margin: 9px 0 13px; }
.snap input { appearance: none; width: 19px; height: 19px; margin-top: 3px; border: 1px solid #8f9199; border-radius: 2px; background: #f3f3f3; }
.combo select:disabled { border: 1px solid #8f9199; color: #777; opacity: 1; height: 38px; padding-left: 6px; background: linear-gradient(#f0f0f0, #f0f0f0) 6px 6px / 188px 25px no-repeat #fff; }
.snap-combo svg { color: #bbb; }
.snap + .grip { margin: 0 6px 0 11px; }

.time {
  display: flex; align-items: center; width: 321px; height: 35px; padding-left: 2px;
  border: 2px solid #b5b7bd; background: #333547;
  color: #f0f0f0; font: 22px/28px "Noto Sans CJK SC", sans-serif; box-shadow: inset 0 0 0 2px #fff;
}
.time span { text-align: center; white-space: nowrap; }
.time .digit { width: 17px; }
.time .unit { width: 46px; font-size: 20px; }
.time .dot { width: 11px; text-align: left; }
.time .dot ~ .unit { width: 40px; }
.time button { flex: none; width: 0; height: 0; border: 7px solid transparent; border-top: 8px solid #fff; border-bottom: 0; }
.large { align-self: center; width: 345px; height: 45px; padding-left: 3px; font-size: 34px; line-height: 38px; margin-right: 5px; }
.large .digit { width: 22px; }
.large .unit { width: 65px; font-size: 29px; }
.large .unit:nth-last-child(2) { width: 59px; padding-left: 7px; }
.rails { flex: none; width: 6px; border: solid #e0e1e6; border-width: 0 2px; margin-top: 1px; }
.rails + .grip { margin: 0 9px 0 4px; }
.sel-left { width: 46px; padding-top: 6px; }
.sel-left .gear { width: 35px; height: 35px; margin: 14px 0 0 2px; }
.sel-times { display: grid; align-content: start; gap: 1px; padding-top: 8px; }
.speed { flex: 1; min-width: 0; margin-left: 9px; }
.speed-inner { display: flex; height: 49px; border-bottom: 2px solid #e0e1e6; }
.speed .grip { margin: 0 3px 0 3px; }
.speed .play { width: 40px; height: 41px; margin-top: 4px; }
.speed .slider { width: 207px; margin: 8px 9px 0 8px; height: 30px; }
.speed .rails { margin-left: 0; }

.status { display: flex; height: 38px; border-top: 3px solid #dcdcde; background: #f0f0f0; line-height: 36px; }
.status span { border-left: 1px solid #d6d6d8; }
.state { width: 264px; margin-left: 14px; padding-left: 6px; }
.message { flex: 1; }
.rate { width: 268px; }
</style>
